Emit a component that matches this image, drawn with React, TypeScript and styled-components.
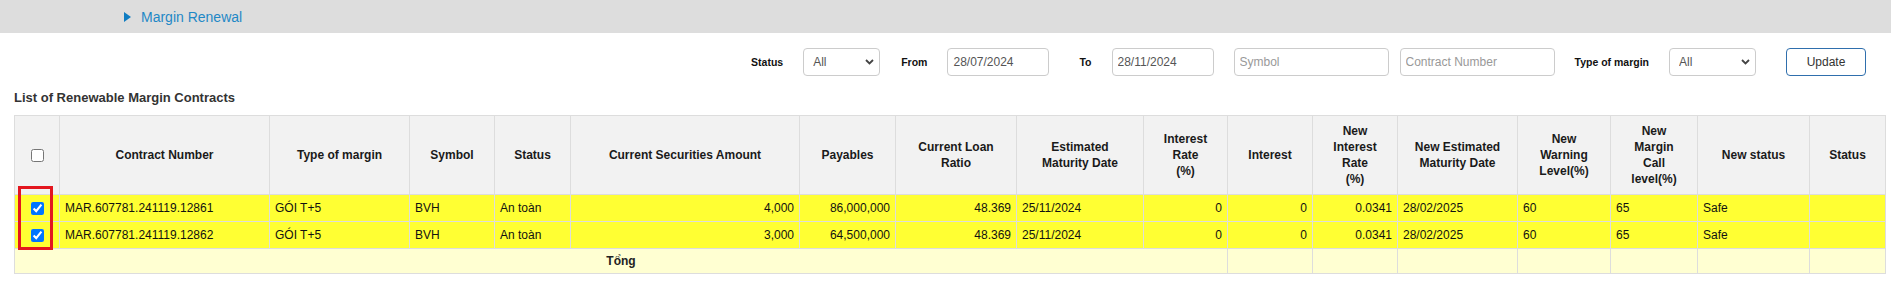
import React from 'react';
import styled, { createGlobalStyle } from 'styled-components';

const GlobalStyle = createGlobalStyle`
  body {
    margin: 0;
    background: #fff;
    font-family: "Liberation Sans", Arial, sans-serif;
    color: #222;
  }
`;

type Align = 'left' | 'right';

const columns: { title: string[]; width: number; align: Align }[] = [
  { title: ['Contract Number'], width: 210, align: 'left' },
  { title: ['Type of margin'], width: 140, align: 'left' },
  { title: ['Symbol'], width: 85, align: 'left' },
  { title: ['Status'], width: 76, align: 'left' },
  { title: ['Current Securities Amount'], width: 229, align: 'right' },
  { title: ['Payables'], width: 96, align: 'right' },
  { title: ['Current Loan', 'Ratio'], width: 121, align: 'right' },
  { title: ['Estimated', 'Maturity Date'], width: 127, align: 'left' },
  { title: ['Interest', 'Rate', '(%)'], width: 84, align: 'right' },
  { title: ['Interest'], width: 85, align: 'right' },
  { title: ['New', 'Interest', 'Rate', '(%)'], width: 85, align: 'right' },
  { title: ['New Estimated', 'Maturity Date'], width: 120, align: 'left' },
  { title: ['New', 'Warning', 'Level(%)'], width: 93, align: 'left' },
  { title: ['New', 'Margin', 'Call', 'level(%)'], width: 87, align: 'left' },
  { title: ['New status'], width: 112, align: 'left' },
  { title: ['Status'], width: 76, align: 'left' },
];

const rows: string[][] = [
  ['MAR.607781.241119.12861', 'GÓI T+5', 'BVH', 'An toàn', '4,000', '86,000,000', '48.369', '25/11/2024', '0', '0', '0.0341', '28/02/2025', '60', '65', 'Safe', ''],
  ['MAR.607781.241119.12862', 'GÓI T+5', 'BVH', 'An toàn', '3,000', '64,500,000', '48.369', '25/11/2024', '0', '0', '0.0341', '28/02/2025', '60', '65', 'Safe', ''],
];

const Chevron = () => (
  <svg width="9" height="6" viewBox="0 0 9 6">
    <polyline points="1,1 4.5,4.5 8,1" fill="none" stroke="#444" strokeWidth="1.8" />
  </svg>
);

const App = () => {
  return (
    <Page>
      <GlobalStyle />
      <TopBar>
        <Triangle />
        <TopLink>Margin Renewal</TopLink>
      </TopBar>

      <FilterBar>
        <Label>Status</Label>
        <SelectBox $width={77}>
          <Select defaultValue="All">
            <option>All</option>
          </Select>
          <Arrow><Chevron /></Arrow>
        </SelectBox>
        <Label $before={21}>From</Label>
        <Input $width={102} defaultValue="28/07/2024" />
        <Label $before={30}>To</Label>
        <Input $width={102} defaultValue="28/11/2024" />
        <Input $width={155} placeholder="Symbol" />
        <Input $width={155} $before={11} placeholder="Contract Number" />
        <Label>Type of margin</Label>
        <SelectBox $width={87}>
          <Select defaultValue="All">
            <option>All</option>
          </Select>
          <Arrow><Chevron /></Arrow>
        </SelectBox>
        <UpdateButton>Update</UpdateButton>
      </FilterBar>

      <Title>List of Renewable Margin Contracts</Title>

      <TableWrap>
        <Table>
          <colgroup>
            <col style={{ width: 45 }} />
            {columns.map((c, i) => (
              <col key={i} style={{ width: c.width }} />
            ))}
          </colgroup>
          <thead>
            <HeadRow>
              <Th>
                <Check type="checkbox" />
              </Th>
              {columns.map((c, i) => (
                <Th key={i}>
                  {c.title.map((line, j) => (
                    <React.Fragment key={j}>
                      {j > 0 && <br />}
                      {line}
                    </React.Fragment>
                  ))}
                </Th>
              ))}
            </HeadRow>
          </thead>
          <tbody>
            {rows.map((r, i) => (
              <DataRow key={i}>
                <Td $align="center">
                  <Check type="checkbox" defaultChecked />
                </Td>
                {r.map((v, j) => (
                  <Td key={j} $align={columns[j].align}>{v}</Td>
                ))}
              </DataRow>
            ))}
            <TotalRow>
              <TotalCell colSpan={10}>Tổng</TotalCell>
              {Array.from({ length: 7 }).map((_, i) => (
                <Td key={i} $align="left" />
              ))}
            </TotalRow>
          </tbody>
        </Table>
        <Highlight />
      </TableWrap>
    </Page>
  );
};

export default App;

const Page = styled.div`
  width: 1891px;
`;

const TopBar = styled.div`
  height: 33px;
  background: #dddddd;
  display: flex;
  align-items: center;
  padding-left: 124px;
  box-sizing: border-box;
`;

const Triangle = styled.span`
  width: 0;
  height: 0;
  border-top: 5px solid transparent;
  border-bottom: 5px solid transparent;
  border-left: 7px solid #0f7cc1;
  margin-right: 10px;
  margin-top: 1px;
`;

const TopLink = styled.span`
  font-size: 14px;
  color: #1f88c6;
  line-height: 16px;
`;

const FilterBar = styled.div`
  display: flex;
  align-items: center;
  justify-content: flex-end;
  height: 28px;
  margin-top: 15px;
  padding-right: 25px;
  gap: 20px;
`;

const Label = styled.span<{ $before?: number }>`
  font-size: 10.5px;
  font-weight: bold;
  color: #111;
  margin-left: ${(p) => (p.$before ? p.$before - 20 : 0)}px;
`;

const SelectBox = styled.div<{ $width: number }>`
  position: relative;
  flex: 0 0 ${(p) => p.$width}px;
  width: ${(p) => p.$width}px;
  height: 28px;
`;

const Select = styled.select`
  appearance: none;
  box-sizing: border-box;
  width: 100%;
  height: 100%;
  border: 1px solid #cccccc;
  border-radius: 4px;
  background: #fff;
  padding: 0 0 0 9px;
  font-family: "Liberation Sans", Arial, sans-serif;
  font-size: 12px;
  color: #555;
  outline: none;
`;

const Arrow = styled.span`
  position: absolute;
  right: 6px;
  top: 11px;
  display: flex;
  pointer-events: none;
`;

const Input = styled.input<{ $width: number; $before?: number }>`
  width: ${(p) => p.$width}px;
  height: 28px;
  box-sizing: border-box;
  border: 1px solid #cccccc;
  border-radius: 4px;
  padding: 0 5px;
  font-family: "Liberation Sans", Arial, sans-serif;
  font-size: 12px;
  color: #555;
  outline: none;
  margin-left: ${(p) => (p.$before ? p.$before - 20 : 0)}px;

  &::placeholder {
    color: #999;
  }
`;

const UpdateButton = styled.button`
  width: 80px;
  height: 28px;
  margin-left: 10px;
  background: #fff;
  border: 1px solid #2f6fad;
  border-radius: 4px;
  font-family: "Liberation Sans", Arial, sans-serif;
  font-size: 12px;
  color: #333;
  cursor: pointer;
`;

const Title = styled.div`
  margin: 14px 0 0 14px;
  font-size: 13px;
  font-weight: bold;
  line-height: 16px;
  color: #333;
`;

const TableWrap = styled.div`
  position: relative;
  margin: 9px 0 0 14px;
  width: 1871px;
`;

const Table = styled.table`
  width: 1871px;
  table-layout: fixed;
  border-collapse: collapse;
  border: 1px solid #dddddd;
  font-size: 12px;
`;

const HeadRow = styled.tr`
  height: 79px;
  background: #f2f2f2;
`;

const Th = styled.th`
  border: 1px solid #dddddd;
  padding: 0 4px;
  font-weight: bold;
  line-height: 16px;
  color: #1a1a1a;
  text-align: center;
  vertical-align: middle;
`;

const DataRow = styled.tr`
  height: 27px;
  background: #ffff33;
`;

const Td = styled.td<{ $align: 'left' | 'right' | 'center' }>`
  border: 1px solid #dddddd;
  padding: 0 5px;
  text-align: ${(p) => p.$align};
  vertical-align: middle;
  white-space: nowrap;
  color: #111;
`;

const TotalRow = styled.tr`
  height: 25px;
  background: #ffffd2;
`;

const TotalCell = styled.td`
  border: 1px solid #dddddd;
  text-align: center;
  font-weight: bold;
  color: #222;
`;

const Check = styled.input`
  margin: 0;
  width: 13px;
  height: 13px;
  vertical-align: middle;
`;

const Highlight = styled.div`
  position: absolute;
  left: 4px;
  top: 71px;
  width: 35px;
  height: 64px;
  box-sizing: border-box;
  border: 3px solid #e3161e;
  pointer-events: none;
`;
